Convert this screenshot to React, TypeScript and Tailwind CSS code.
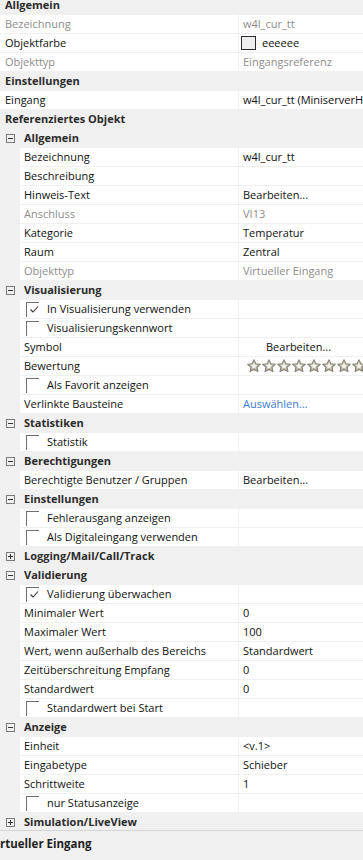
import React from "react";

const FONT = '"Open Sans", "Noto Sans", Arial, sans-serif';

type Row =
  | { k: "cat0"; t: string }
  | { k: "cat1"; t: string; open: boolean }
  | { k: "p0"; n: string; v?: React.ReactNode; dis?: boolean }
  | { k: "p1"; n: string; v?: React.ReactNode; dis?: boolean }
  | { k: "chk"; n: string; on: boolean };

function Expander({ open }: { open: boolean }) {
  return (
    <svg width="9" height="9" viewBox="0 0 9 9" className="shrink-0">
      <rect x="0.5" y="0.5" width="8" height="8" fill="none" stroke="#7a7a7a" />
      <line x1="2" y1="4.5" x2="7" y2="4.5" stroke="#333" />
      {!open && <line x1="4.5" y1="2" x2="4.5" y2="7" stroke="#333" />}
    </svg>
  );
}

function Check({ on }: { on: boolean }) {
  return (
    <span className="relative ml-[2px] mt-[2px] h-[15px] w-[13px] shrink-0 self-start border-l border-t border-[#707070]">
      {on && (
        <svg width="13" height="13" viewBox="0 0 13 13" className="absolute left-[1px] top-0">
          <polyline points="2.5,6.5 5,9 10,3.5" fill="none" stroke="#333" strokeWidth="1.1" />
        </svg>
      )}
    </span>
  );
}

function Star() {
  return (
    <svg width="14" height="14" viewBox="0 0 24 24" className="shrink-0">
      <defs>
        <linearGradient id="sg" x1="0" y1="0" x2="0" y2="1">
          <stop offset="0" stopColor="#e4e0d4" />
          <stop offset="1" stopColor="#a9a596" />
        </linearGradient>
      </defs>
      <path
        d="M12 1.2l3.3 6.9 7.5.9-5.5 5.1 1.5 7.5L12 17.9l-6.8 3.7 1.5-7.5L1.2 9l7.5-.9z"
        fill="url(#sg)"
        stroke="#858174"
        strokeWidth="1.8"
        strokeLinejoin="round"
      />
      <path d="M12 6.8l1.6 3.4 3.7.4-2.7 2.5.7 3.7L12 15l-3.3 1.8.7-3.7-2.7-2.5 3.7-.4z" fill="#f4f2ec" />
    </svg>
  );
}

const dis = "text-[#8d8d8d]";

const rows: Row[] = [
  { k: "cat0", t: "Allgemein" },
  { k: "p0", n: "Bezeichnung", v: "w4l_cur_tt", dis: true },
  {
    k: "p0",
    n: "Objektfarbe",
    v: (
      <span className="flex items-center">
        <span className="-ml-[2px] mr-[6px] h-[14px] w-[15px] border border-[#2a2a2a] bg-[#eeeeee]" />
        eeeeee
      </span>
    ),
  },
  { k: "p0", n: "Objekttyp", v: "Eingangsreferenz", dis: true },
  { k: "cat0", t: "Einstellungen" },
  { k: "p0", n: "Eingang", v: "w4l_cur_tt (MiniserverHaus)" },
  { k: "cat0", t: "Referenziertes Objekt" },
  { k: "cat1", t: "Allgemein", open: true },
  { k: "p1", n: "Bezeichnung", v: "w4l_cur_tt" },
  { k: "p1", n: "Beschreibung", v: "" },
  { k: "p1", n: "Hinweis-Text", v: "Bearbeiten..." },
  { k: "p1", n: "Anschluss", v: "VI13", dis: true },
  { k: "p1", n: "Kategorie", v: "Temperatur" },
  { k: "p1", n: "Raum", v: "Zentral" },
  { k: "p1", n: "Objekttyp", v: "Virtueller Eingang", dis: true },
  { k: "cat1", t: "Visualisierung", open: true },
  { k: "chk", n: "In Visualisierung verwenden", on: true },
  { k: "chk", n: "Visualisierungskennwort", on: false },
  { k: "p1", n: "Symbol", v: <span className="pl-[23px]">Bearbeiten...</span> },
  {
    k: "p1",
    n: "Bewertung",
    v: (
      <span className="flex gap-px pl-[4px]">
        {Array.from({ length: 10 }).map((_, i) => (
          <Star key={i} />
        ))}
      </span>
    ),
  },
  { k: "chk", n: "Als Favorit anzeigen", on: false },
  { k: "p1", n: "Verlinkte Bausteine", v: <span className="text-[#3a7bd5]">Auswählen...</span> },
  { k: "cat1", t: "Statistiken", open: true },
  { k: "chk", n: "Statistik", on: false },
  { k: "cat1", t: "Berechtigungen", open: true },
  { k: "p1", n: "Berechtigte Benutzer / Gruppen", v: "Bearbeiten..." },
  { k: "cat1", t: "Einstellungen", open: true },
  { k: "chk", n: "Fehlerausgang anzeigen", on: false },
  { k: "chk", n: "Als Digitaleingang verwenden", on: false },
  { k: "cat1", t: "Logging/Mail/Call/Track", open: false },
  { k: "cat1", t: "Validierung", open: true },
  { k: "chk", n: "Validierung überwachen", on: true },
  { k: "p1", n: "Minimaler Wert", v: "0" },
  { k: "p1", n: "Maximaler Wert", v: "100" },
  { k: "p1", n: "Wert, wenn außerhalb des Bereichs", v: "Standardwert" },
  { k: "p1", n: "Zeitüberschreitung Empfang", v: "0" },
  { k: "p1", n: "Standardwert", v: "0" },
  { k: "chk", n: "Standardwert bei Start", on: false },
  { k: "cat1", t: "Anzeige", open: true },
  { k: "p1", n: "Einheit", v: "<v.1>" },
  { k: "p1", n: "Eingabetype", v: "Schieber" },
  { k: "p1", n: "Schrittweite", v: "1" },
  { k: "chk", n: "nur Statusanzeige", on: false },
  { k: "cat1", t: "Simulation/LiveView", open: false },
];

function RowView({ r }: { r: Row }) {
  if (r.k === "cat0") {
    return (
      <div className="flex h-[19px] items-center pl-[5px] font-bold text-[#2b2b2b]">{r.t}</div>
    );
  }
  if (r.k === "cat1") {
    return (
      <div className="flex h-[19px] items-center">
        <div className="flex w-[20px] justify-center pl-px">
          <Expander open={r.open} />
        </div>
        <span className="pl-[4px] font-bold text-[#2b2b2b]">{r.t}</span>
      </div>
    );
  }
  const nested = r.k !== "p0";
  return (
    <div className={`flex h-[19px] pb-px ${nested ? "pl-[20px]" : ""}`}>
      <div
        className={`flex h-[18px] shrink-0 items-center overflow-visible whitespace-nowrap bg-white ${
          nested ? "w-[218px] pl-[4px]" : "w-[238px] pl-[5px]"
        } ${r.k !== "chk" && r.dis ? dis : "text-[#111]"}`}
      >
        {r.k === "chk" ? (
          <>
            <Check on={r.on} />
            <span className="pl-[8px]">{r.n}</span>
          </>
        ) : (
          r.n
        )}
      </div>
      <div
        className={`ml-px flex h-[18px] min-w-0 flex-1 items-center overflow-hidden whitespace-nowrap bg-white pl-[4px] ${
          r.k !== "chk" && r.dis ? dis : "text-[#111]"
        }`}
      >
        {r.k !== "chk" ? r.v : null}
      </div>
    </div>
  );
}

export default function App() {
  return (
    <div
      className="h-[860px] w-[363px] overflow-hidden bg-[#f0f0f0] text-[11px]"
      style={{ fontFamily: FONT }}
    >
      <div className="-mt-[4px]">
        {rows.map((r, i) => (
          <RowView key={i} r={r} />
        ))}
      </div>
      <div className="mt-[-2px] border-t border-[#d4d4d4] pt-[5px] text-[11.5px] font-bold leading-[16px] text-[#1e1e1e]">
        rtueller Eingang
      </div>
    </div>
  );
}
